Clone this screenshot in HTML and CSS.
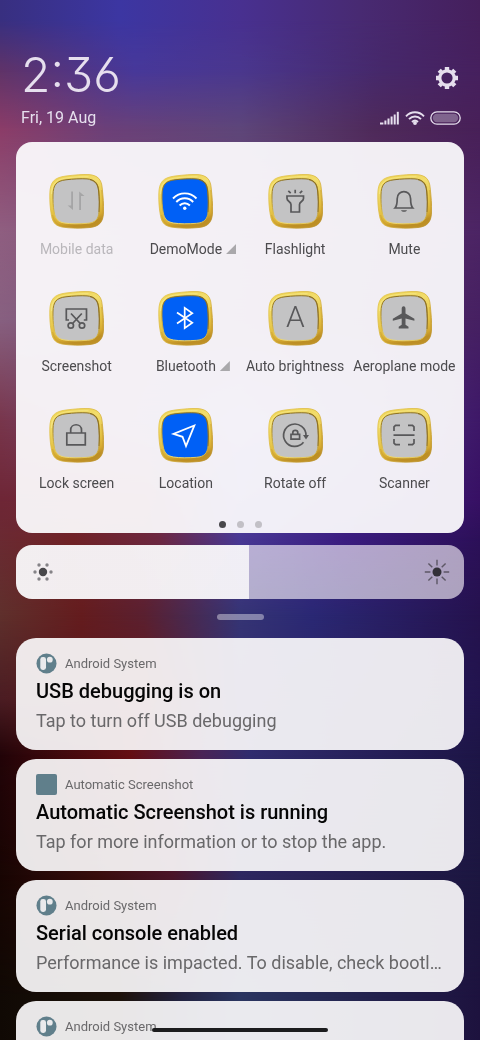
FILE: index.html
```html
<!DOCTYPE html>
<html lang="en">
<head>
<meta charset="utf-8">
<meta name="viewport" content="width=device-width, initial-scale=1">
<title>Control centre</title>
<link rel="stylesheet" href="styles.css">
</head>
<body>
<div class="wallpaper" aria-hidden="true">
  <div class="band band-2"></div>
  <div class="band band-3"></div>
  <div class="band band-4"></div>
  <div class="band band-5"></div>
  <div class="band band-6"></div>
  <div class="band band-7"></div>
  <div class="band band-8"></div>
  <div class="band band-9"></div>
  <div class="band band-10"></div>
  <div class="band band-11"></div>
  <div class="band band-12"></div>
  <div class="band band-13"></div>
</div>

<svg class="defs" aria-hidden="true">
  <defs>
    <linearGradient id="gold" x1="0" y1="0" x2=".25" y2="1">
      <stop offset="0" stop-color="#ecd04c"/><stop offset=".3" stop-color="#f2dd6c"/><stop offset=".65" stop-color="#e6c648"/><stop offset=".9" stop-color="#d6aa30"/><stop offset="1" stop-color="#bd8f24"/>
    </linearGradient>
    <linearGradient id="bevel" x1=".3" y1="0" x2=".1" y2="1">
      <stop offset="0" stop-color="#8c7020"/><stop offset=".45" stop-color="#a88a30"/><stop offset=".8" stop-color="#dcbc4c"/><stop offset="1" stop-color="#f3e07c"/>
    </linearGradient>
    <linearGradient id="rim" x1="0" y1="0" x2="1" y2="1">
      <stop offset="0" stop-color="#e6c94e"/><stop offset=".5" stop-color="#d9b53c"/><stop offset="1" stop-color="#b68a24"/>
    </linearGradient>
    <symbol id="frame" viewBox="0 0 55 55">
      <path d="M.8 20C1 8 5 3.500 17 2 25 1 34 .2 40 .6 49 1.400 52.500 5.500 53.200 14 54 22 55 31 54.500 39 54 48.500 50 52.500 41 53.500 31 54.600 21 54.300 13 53 5.500 51.500 3.300 47.500 2.200 40 1 33 .7 27 .8 20Z" fill="url(#gold)" stroke="url(#rim)" stroke-width=".8"/>
      <path d="M52.500 16C53.500 24 54 32 53.500 39 53 47.500 49.500 51.500 41 52.600 31 53.600 21 53.400 14 52.200 7 50.800 4.500 47 3.500 41" fill="none" stroke="#c49730" stroke-width="1.200" opacity=".4"/>
      <path d="M2.600 20C2.800 10 6.500 5.500 17 4 25 3 33 2.400 39.500 2.800" fill="none" stroke="#f9ec98" stroke-width="1" opacity=".6"/>
      <path d="M4 21C4.200 10.500 7.500 7 17 5.800 24 4.900 32 4.500 38 4.900 45.500 5.500 49 9 49.600 17 50.400 24 50.600 32 50 38 49.400 45.500 46 48.800 38.500 49.300 30 50 22 50 15.500 49 8.500 47.800 6.200 44.500 5.100 38 4.100 32 3.900 27 4 21Z" fill="currentColor" stroke="url(#bevel)" stroke-width="1"/>
      <path d="M41 5.600C46.500 6.700 49.200 10 49.800 17 50.500 24 50.600 32 50 38" fill="none" stroke="#8a6c1e" stroke-width="1.200" opacity=".65"/>
    </symbol>
    <symbol id="brand" viewBox="0 0 22 22">
      <circle cx="11" cy="11" r="10.500" fill="#607f8b"/>
      <rect x="4.500" y="4.200" width="6" height="13.500" rx="2.600" fill="#e9eaec"/>
      <circle cx="14.500" cy="7" r="3" fill="#e9eaec"/>
    </symbol>
  </defs>
</svg>

<div class="shade">
  <header class="header">
    <div class="header-row">
      <time class="clock">2:36</time>
      <button class="settings" type="button" aria-label="Settings">
        <svg width="24" height="24" viewBox="0 0 24 24" fill="none" stroke="currentColor">
          <circle cx="12" cy="12" r="7.200" stroke-width="3.200"/>
          <g stroke-width="4.400"><path d="M12 1v3M12 20v3M1 12h3M20 12h3M4.200 4.200l2.100 2.100M17.700 17.700l2.100 2.100M4.200 19.800l2.100-2.100M17.700 6.300l2.100-2.100"/></g>
        </svg>
      </button>
    </div>
    <div class="header-row">
      <div class="date">Fri, 19 Aug</div>
      <div class="status">
        <svg width="20" height="14" viewBox="0 0 20 14" fill="currentColor" role="img" aria-label="Signal">
          <rect x="0" y="11.500" width="3.400" height="2"/><rect x="4.400" y="9.500" width="2" height="4"/><rect x="7.500" y="7.500" width="2" height="6"/><rect x="10.600" y="5.500" width="2" height="8"/><rect x="13.700" y="3.500" width="2" height="10"/><rect x="16.800" y=".8" width="2" height="12.700"/>
        </svg>
        <svg width="20" height="14" viewBox="0 0 20 14" fill="none" stroke="currentColor" stroke-width="1.900" role="img" aria-label="Wi-Fi">
          <path d="M1 5.300C6-.1 14-.1 19 5.300M4 8.200c3.500-3.700 8.500-3.700 12 0M7 11c2-1.900 4-1.900 6 0"/><circle cx="10" cy="12" r="1" fill="currentColor"/>
        </svg>
        <svg width="31" height="14" viewBox="0 0 31 14" role="img" aria-label="Battery">
          <rect x=".8" y=".8" width="29.400" height="12.400" rx="6.200" fill="none" stroke="currentColor" stroke-width="1.300"/><rect x="2.800" y="2.800" width="25.400" height="8.400" rx="4.200" fill="currentColor" opacity=".35"/>
        </svg>
      </div>
    </div>
  </header>

  <main>
    <section class="panel" aria-label="Quick settings">
      <div class="tiles">
        <button class="tile disabled" type="button">
          <svg class="tile-icon" viewBox="0 0 55 55"><use href="#frame"/><g class="glyph solid"><path d="M22.200 17.500h1.800v18.500l-5.300-4.500h3.500zM30.200 36V17.500l5.300 4.500h-3.500v14z"/></g></svg>
          <span class="label">Mobile data</span>
        </button>
        <button class="tile on" type="button">
          <svg class="tile-icon" viewBox="0 0 55 55"><use href="#frame"/><g class="glyph"><path stroke-width="1.900" d="M15 24.500c6.500-6.800 17-6.800 23.500 0M18.300 28c4.700-5 12.200-5 16.900 0M21.600 31.500c3-3.100 7.300-3.100 10.300 0"/><circle cx="26.750" cy="34.300" r="1.700" class="solid" stroke="none"/></g></svg>
          <span class="label">DemoMode<i class="more"></i></span>
        </button>
        <button class="tile" type="button">
          <svg class="tile-icon" viewBox="0 0 55 55"><use href="#frame"/><g class="glyph"><path d="M19 22h16.500v2.500c0 3-4 3-4 6V38h-8.500v-7.500c0-3-4-3-4-6zM27.200 15.700v3.500M20.300 16.800l2.400 2.400M34.200 16.800l-2.400 2.400"/></g></svg>
          <span class="label">Flashlight</span>
        </button>
        <button class="tile" type="button">
          <svg class="tile-icon" viewBox="0 0 55 55"><use href="#frame"/><g class="glyph"><path d="M18 34c1.800-2 2.200-4 2.200-9.300 0-9.500 13.400-9.500 13.400 0 0 5.300.4 7.300 2.200 9.300z"/><path class="solid" stroke="none" d="M24 36.200h6c-1 2.200-5 2.200-6 0z"/></g></svg>
          <span class="label">Mute</span>
        </button>

        <button class="tile" type="button">
          <svg class="tile-icon" viewBox="0 0 55 55"><use href="#frame"/><g class="glyph"><path d="M20 29h-2.700V18h20.200v11h-2.700M22 22.500l9 9.800M32.800 22.500l-9 9.800"/><circle cx="21.800" cy="34.500" r="2.700"/><circle cx="33" cy="34.500" r="2.700"/></g></svg>
          <span class="label">Screenshot</span>
        </button>
        <button class="tile on" type="button">
          <svg class="tile-icon" viewBox="0 0 55 55"><use href="#frame"/><g class="glyph"><path d="M19 21.500l15.300 10.300-7.600 5.400V16.800l7.600 5.400L19 32.500"/></g></svg>
          <span class="label">Bluetooth<i class="more"></i></span>
        </button>
        <button class="tile" type="button">
          <svg class="tile-icon" viewBox="0 0 55 55"><use href="#frame"/><text class="auto" x="27.300" y="36" text-anchor="middle">A</text></svg>
          <span class="label">Auto brightness</span>
        </button>
        <button class="tile" type="button">
          <svg class="tile-icon" viewBox="0 0 55 55"><use href="#frame"/><g class="glyph solid"><path d="M26.600 15.300c1.300 0 1.900 1 1.900 2.500v4.700l8.900 5.300v2l-8.900-2.300v6.200l3 2v1.800h-9.800v-1.800l3-2v-6.200l-8.900 2.300v-2l8.900-5.300v-4.700c0-1.500.6-2.500 1.900-2.500z"/></g></svg>
          <span class="label">Aeroplane mode</span>
        </button>

        <button class="tile" type="button">
          <svg class="tile-icon" viewBox="0 0 55 55"><use href="#frame"/><g class="glyph"><path d="M17.800 25h18.500v11.800H17.800zM21.700 25v-3c0-7 10.800-7 10.800 0v3"/></g></svg>
          <span class="label">Lock screen</span>
        </button>
        <button class="tile on" type="button">
          <svg class="tile-icon" viewBox="0 0 55 55"><use href="#frame"/><g class="glyph"><path stroke-width="1.800" d="M36.300 17.500L15.500 25.800l9 3 3.500 9.200z"/></g></svg>
          <span class="label">Location</span>
        </button>
        <button class="tile" type="button">
          <svg class="tile-icon" viewBox="0 0 55 55"><use href="#frame"/><g class="glyph"><path d="M35.500 34.300A11.200 11.200 0 1 1 38 27.500"/><path class="solid" stroke="none" d="M35 27h6L38 31.500z"/><path d="M23 26.300h8.600v4.800H23zM24.800 26v-1.300c0-3 5-3 5 0V26"/></g></svg>
          <span class="label">Rotate off</span>
        </button>
        <button class="tile" type="button">
          <svg class="tile-icon" viewBox="0 0 55 55"><use href="#frame"/><g class="glyph"><path d="M17 23v-4.200l1.500-1.500H23M31 17.300h4.500l1.500 1.500V23M37 31v4.200l-1.500 1.500H31M23 36.700h-4.500L17 35.200V31M16.500 27.200h21"/></g></svg>
          <span class="label">Scanner</span>
        </button>
      </div>
      <div class="pager"><i class="dot current"></i><i class="dot"></i><i class="dot"></i></div>
    </section>

    <div class="brightness">
      <input class="slider" type="range" min="0" max="100" value="52" aria-label="Brightness">
      <svg class="sun low" width="26" height="26" viewBox="-13 -13 26 26" aria-hidden="true">
        <circle r="4.200" fill="#48474a"/>
        <g fill="#858387"><circle cx="-8" r="1.700"/><circle cx="8" r="1.700"/><circle cx="-4" cy="-7" r="1.700"/><circle cx="4" cy="-7" r="1.700"/><circle cx="-4" cy="7" r="1.700"/><circle cx="4" cy="7" r="1.700"/></g>
      </svg>
      <svg class="sun high" width="26" height="26" viewBox="-13 -13 26 26" aria-hidden="true">
        <circle r="4.500" fill="#323037"/>
        <path d="M0-12.200v5.600M0 12.200V6.600M-12.200 0h5.600M12.200 0H6.600M-8.600-8.600l3.900 3.900M8.600 8.600L4.700 4.700M-8.600 8.600l3.900-3.900M8.600-8.600L4.700-4.700" stroke="#5d5765" stroke-width="1.400"/>
      </svg>
    </div>
    <div class="grip"></div>

    <section class="notifications" aria-label="Notifications">
      <article class="card">
        <div class="app"><svg class="app-icon"><use href="#brand"/></svg>Android System</div>
        <h2 class="title">USB debugging is on</h2>
        <p class="text">Tap to turn off USB debugging</p>
      </article>
      <article class="card">
        <div class="app"><span class="app-icon square"></span>Automatic Screenshot</div>
        <h2 class="title">Automatic Screenshot is running</h2>
        <p class="text">Tap for more information or to stop the app.</p>
      </article>
      <article class="card">
        <div class="app"><svg class="app-icon"><use href="#brand"/></svg>Android System</div>
        <h2 class="title">Serial console enabled</h2>
        <p class="text">Performance is impacted. To disable, check bootl…</p>
      </article>
      <article class="card">
        <div class="app"><svg class="app-icon"><use href="#brand"/></svg>Android System</div>
      </article>
    </section>
  </main>
</div>
<div class="home-bar"></div>
</body>
</html>
```
FILE: styles.css
```css
* {
  box-sizing: border-box;
}

body {
  margin: 0;
  background: #1d1546;
  font-family: Roboto, "Liberation Sans", sans-serif;
}

button {
  margin: 0;
  padding: 0;
  border: 0;
  background: none;
  color: inherit;
  font: inherit;
}

/* Wallpaper: each band fades in over the one before it */
.wallpaper {
  position: fixed;
  inset: 0;
  overflow: hidden;
  background: linear-gradient(90deg, #382f80, #3c36a2 25%, #483090 50%, #482a72 75%, #451f5c);
}

.band {
  position: absolute;
  inset: var(--from) 0 0;
  -webkit-mask-image: linear-gradient(transparent, #000 var(--fade));
  mask-image: linear-gradient(transparent, #000 var(--fade));
}

.band-2 { --from: 20px; --fade: 50px; background: linear-gradient(90deg, #5f3368, #47389a 28%, #4a378e 50%, #46286a 80%, #46205e); }
.band-3 { --from: 70px; --fade: 60px; background: linear-gradient(90deg, #8c3d68, #6c4078 22%, #5e4679 50%, #4f2a5a 78%, #482058); }
.band-4 { --from: 130px; --fade: 100px; background: linear-gradient(90deg, #8f5e80, #4c2464); }
.band-5 { --from: 230px; --fade: 90px; background: linear-gradient(90deg, #876080, #462062); }
.band-6 { --from: 320px; --fade: 100px; background: linear-gradient(90deg, #78364c, #6a58a8 50%, #3e1868); }
.band-7 { --from: 420px; --fade: 80px; background: linear-gradient(90deg, #6e2636, #74283a 30%, #5040a0 50%, #371064); }
.band-8 { --from: 500px; --fade: 40px; background: linear-gradient(90deg, #6a2a32, #702226 15%, #6c2740 33%, #483894 50%, #3b1c80 72%, #2c1058); }
.band-9 { --from: 540px; --fade: 75px; background: linear-gradient(90deg, #5f302c, #641c1e 17%, #5a2030 30%, #353474 50%, #2a2874 65%, #25124e); }
.band-10 { --from: 615px; --fade: 85px; background: linear-gradient(90deg, #4a1c22, #68181a 30%, #352f72 50%, #21144e); }
.band-11 { --from: 700px; --fade: 55px; background: linear-gradient(90deg, #220408, #640e12 27%, #4a2456 42%, #302c6e 52%, #1d1546); }
.band-12 { --from: 755px; --fade: 120px; background: linear-gradient(90deg, #180503, #380d0c 20%, #4a1428 36%, #2e2760 50%, #1c1640); }
.band-13 { --from: 875px; --fade: 125px; background: linear-gradient(90deg, #100904, #1c120a 25%, #222342 38%, #2a3560 50%, #1d123e); }

.defs {
  position: absolute;
  width: 0;
  height: 0;
}

.shade {
  position: relative;
  height: 100vh;
  overflow: hidden;
  padding: 44px 16px 0;
}

.header {
  padding: 0 3px 14px 5px;
  color: #e6dfee;
}

.header-row {
  display: flex;
  align-items: center;
  justify-content: space-between;
}

.clock {
  height: 64px;
  font-family: Inter, Lato, sans-serif;
  font-size: 48px;
  font-weight: 300;
  line-height: 62px;
  font-feature-settings: "cv03", "cv09";
}

.settings {
  display: flex;
  padding: 4px 2px 0;
}

.date {
  font-size: 16px;
  line-height: 20px;
}

.status {
  display: flex;
  align-items: center;
  gap: 5px;
}

.panel {
  padding: 32px 5px 5px 6px;
  border-radius: 16px;
  background: rgba(252, 251, 253, 0.94);
}

.tiles {
  display: grid;
  grid-template-columns: repeat(4, 1fr);
  row-gap: 32px;
}

.tile {
  display: flex;
  flex-direction: column;
  align-items: center;
  gap: 10px;
  min-width: 0;
  color: #4c4b4e;
}

.tile-icon {
  width: 55px;
  height: 55px;
  color: #c3c3c4;
}

.tile.on .tile-icon {
  color: #0060f6;
}

.glyph {
  fill: none;
  stroke: #58585a;
  stroke-width: 1.7;
}

.solid {
  fill: #58585a;
}

.glyph.solid {
  stroke: none;
}

.on .glyph {
  stroke: #fff;
}

.on .solid {
  fill: #fff;
}

.disabled .solid {
  fill: #a5a5a6;
}

.disabled .label {
  color: #b9b7bb;
}

.auto {
  fill: #58585a;
  font-family: Roboto, sans-serif;
  font-size: 30px;
  font-weight: 300;
}

.label {
  position: relative;
  font-size: 14px;
  line-height: 20px;
  white-space: nowrap;
}

.more {
  position: absolute;
  left: 100%;
  bottom: 5px;
  width: 10px;
  height: 10px;
  margin-left: 4px;
  background: #a9a8ab;
  clip-path: polygon(100% 0, 100% 100%, 0 100%);
}

.pager {
  display: flex;
  justify-content: center;
  gap: 11px;
  margin-top: 28px;
}

.dot {
  width: 7px;
  height: 7px;
  border-radius: 50%;
  background: #c2c0c6;
}

.dot.current {
  background: #48474b;
}

.brightness {
  position: relative;
  height: 54px;
  margin-top: 12px;
}

.slider {
  display: block;
  width: 100%;
  height: 100%;
  margin: 0;
  border-radius: 16px;
  appearance: none;
  background: linear-gradient(90deg, rgba(250, 249, 251, 0.95) 52%, rgba(255, 250, 255, 0.62) 52%);
}

.slider::-webkit-slider-thumb {
  width: 1px;
  height: 54px;
  appearance: none;
  background: transparent;
}

.sun {
  position: absolute;
  top: 14px;
  pointer-events: none;
}

.low {
  left: 14px;
}

.high {
  right: 14px;
}

.grip {
  width: 47px;
  height: 6px;
  margin: 15px auto 18px;
  border-radius: 3px;
  background: rgba(255, 255, 255, 0.4);
}

.notifications {
  display: flex;
  flex-direction: column;
  gap: 9px;
}

.card {
  min-height: 112px;
  padding: 15px 20px 14px;
  border-radius: 20px;
  background: rgba(251, 250, 251, 0.92);
}

.app {
  display: flex;
  align-items: center;
  gap: 8px;
  color: #6a696b;
  font-size: 13px;
  line-height: 21px;
}

.app-icon {
  width: 21px;
  height: 21px;
}

.square {
  border-radius: 2px;
  background: #607f8b;
}

.title {
  margin: 4px 0;
  color: #060606;
  font-size: 20px;
  font-weight: 500;
  line-height: 26px;
}

.text {
  margin: 0;
  color: #69686a;
  font-size: 18px;
  line-height: 26px;
  white-space: nowrap;
}

.home-bar {
  position: fixed;
  bottom: 8px;
  left: 50%;
  width: 176px;
  height: 4px;
  margin-left: -88px;
  border-radius: 2px;
  background: #1c1c1e;
}
```
